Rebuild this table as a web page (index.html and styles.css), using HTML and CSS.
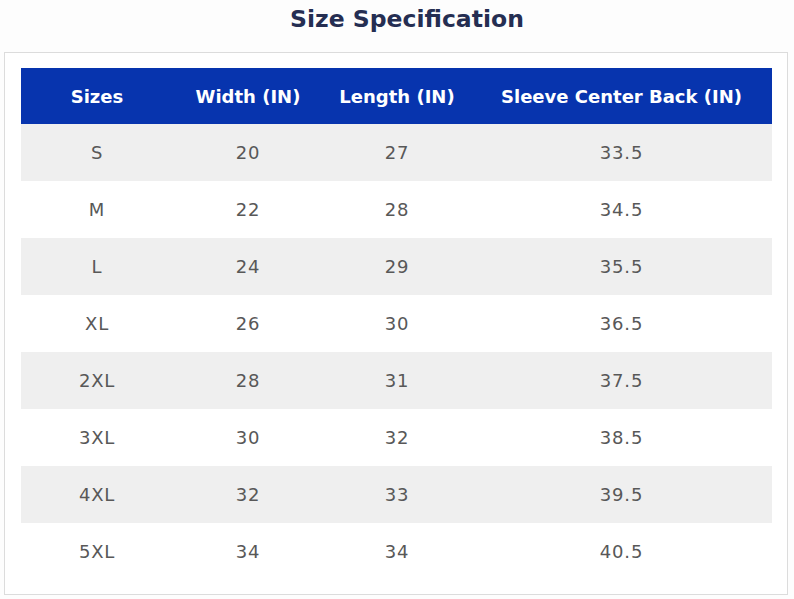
FILE: index.html
```html
<!DOCTYPE html>
<html>
<head>
<meta charset="utf-8">
<link rel="stylesheet" href="styles.css">
</head>
<body>
<div class="page">
  <h1 class="title">Size Specification</h1>
  <div class="box">
    <div class="table">
      <div class="row head">
        <div>Sizes</div><div>Width (IN)</div><div>Length (IN)</div><div>Sleeve Center Back (IN)</div>
      </div>
      <div class="row alt"><div>S</div><div>20</div><div>27</div><div>33.5</div></div>
      <div class="row"><div>M</div><div>22</div><div>28</div><div>34.5</div></div>
      <div class="row alt"><div>L</div><div>24</div><div>29</div><div>35.5</div></div>
      <div class="row"><div>XL</div><div>26</div><div>30</div><div>36.5</div></div>
      <div class="row alt"><div>2XL</div><div>28</div><div>31</div><div>37.5</div></div>
      <div class="row"><div>3XL</div><div>30</div><div>32</div><div>38.5</div></div>
      <div class="row alt"><div>4XL</div><div>32</div><div>33</div><div>39.5</div></div>
      <div class="row"><div>5XL</div><div>34</div><div>34</div><div>40.5</div></div>
    </div>
  </div>
</div>
</body>
</html>
```

FILE: styles.css
```css
html, body {
  margin: 0;
  padding: 0;
  background: #fdfdfd;
}
.page {
  width: 794px;
  height: 599px;
  padding: 0 6px 0 4px;
  box-sizing: border-box;
  font-family: "DejaVu Sans", sans-serif;
}
.title {
  margin: 0;
  height: 52px;
  padding-top: 3px;
  box-sizing: border-box;
  text-align: center;
  font-size: 23.5px;
  font-weight: bold;
  color: #252e52;
  line-height: 32px;
  padding-left: 22px;
}
.box {
  height: 543px;
  border: 1px solid #dcdcdc;
  box-sizing: border-box;
  padding: 15px 15px 0 16px;
  background: #fff;
}
.row {
  display: grid;
  grid-template-columns: 152px 150px 148px 301px;
  height: 57px;
  align-items: center;
  text-align: center;
  font-size: 18px;
  letter-spacing: 0.8px;
  color: #585858;
}
.row.head {
  height: 56px;
  background: #0734ae;
  color: #fff;
  font-weight: bold;
  font-size: 18px;
  letter-spacing: 0;
}
.row.alt {
  background: #efefef;
}
```
